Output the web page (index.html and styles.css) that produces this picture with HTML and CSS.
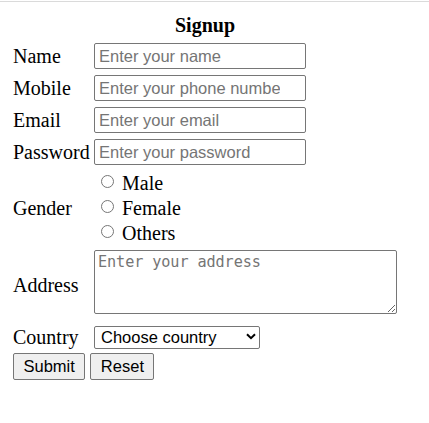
FILE: index.html
```html
<!DOCTYPE html>
<html>
<head>
<meta charset="utf-8">
<title>Signup</title>
<link rel="stylesheet" href="styles.css">
</head>
<body>
<div class="topline"></div>
<form class="signup">
  <div class="title">Signup</div>
  <div class="grid">
    <label class="lbl" for="name">Name</label>
    <input id="name" class="field" type="text" placeholder="Enter your name">
    <label class="lbl" for="mobile">Mobile</label>
    <input id="mobile" class="field" type="text" placeholder="Enter your phone number">
    <label class="lbl" for="email">Email</label>
    <input id="email" class="field" type="text" placeholder="Enter your email">
    <label class="lbl" for="pw">Password</label>
    <input id="pw" class="field" type="password" placeholder="Enter your password">
    <div class="lbl">Gender</div>
    <div class="opts">
      <label class="opt"><input class="radio" type="radio" name="g"> Male</label>
      <label class="opt"><input class="radio" type="radio" name="g"> Female</label>
      <label class="opt"><input class="radio" type="radio" name="g"> Others</label>
    </div>
    <label class="lbl" for="addr">Address</label>
    <textarea id="addr" class="area" placeholder="Enter your address"></textarea>
    <label class="lbl" for="country">Country</label>
    <div class="selwrap">
      <select id="country" class="sel"><option>Choose country</option></select>
      <svg class="chev" width="10" height="7" viewBox="0 0 10 7"><path d="M1 1.2 L5 5.2 L9 1.2" fill="none" stroke="#000" stroke-width="2"/></svg>
    </div>
    <div class="actions">
      <button type="button" class="btn">Submit</button>
      <button type="button" class="btn">Reset</button>
    </div>
  </div>
</form>
</body>
</html>
```

FILE: styles.css
```css
html, body {
  margin: 0;
  background: #fff;
}
body {
  font-family: "Liberation Serif", "Times New Roman", serif;
  font-size: 20px;
  color: #000;
}
.topline {
  height: 1px;
  margin-top: 1px;
  background: #dadada;
}
.signup {
  width: 384px;
  padding-left: 13px;
  margin-top: 12px;
}
.title {
  text-align: center;
  font-weight: bold;
  line-height: 22px;
}
.grid {
  display: grid;
  grid-template-columns: 81px 303px;
  row-gap: 6px;
  margin-top: 7px;
  align-items: center;
}
.lbl {
  line-height: 22px;
}
.field {
  box-sizing: border-box;
  width: 212px;
  height: 26px;
  margin: 0;
  border: 1px solid #767676;
  border-radius: 2px;
  padding: 0 25px 0 4px;
  font: 16.5px "Liberation Sans", Arial, sans-serif;
  color: #000;
  background: #fff;
}
.field::placeholder,
.area::placeholder {
  color: #757575;
  opacity: 1;
}
.opts {
  line-height: 25px;
  margin-bottom: -2px;
}
.opt {
  display: block;
}
.radio {
  appearance: none;
  -webkit-appearance: none;
  display: inline-block;
  box-sizing: border-box;
  width: 13px;
  height: 13px;
  margin: 0 3px 0 7px;
  border: 1px solid #767676;
  border-radius: 50%;
  background: #fff;
  vertical-align: 2px;
}
.area {
  display: block;
  box-sizing: border-box;
  width: 303px;
  height: 64px;
  margin: 0 0 5px 0;
  border: 1px solid #767676;
  border-radius: 2px;
  padding: 2px 3px;
  font: 15.2px "DejaVu Sans Mono", "Liberation Mono", monospace;
  letter-spacing: -0.1px;
  background: #fff;
}
.selwrap {
  position: relative;
  justify-self: start;
  width: 166px;
  height: 23px;
}
.sel {
  appearance: none;
  -webkit-appearance: none;
  box-sizing: border-box;
  width: 166px;
  height: 23px;
  margin: 0;
  padding: 0 0 0 6px;
  border: 1px solid #767676;
  border-radius: 2px;
  background: #fff;
  color: #000;
  font: 16.5px "Liberation Sans", Arial, sans-serif;
}
.chev {
  position: absolute;
  left: 152px;
  top: 8px;
  pointer-events: none;
}
.actions {
  grid-column: 1 / -1;
  display: flex;
  gap: 5px;
  margin-top: -1px;
}
.btn {
  box-sizing: border-box;
  height: 27px;
  margin: 0;
  padding: 0 9.5px;
  border: 1px solid #767676;
  border-radius: 2px;
  background: #efefef;
  color: #000;
  font: 16.5px "Liberation Sans", Arial, sans-serif;
}
```
